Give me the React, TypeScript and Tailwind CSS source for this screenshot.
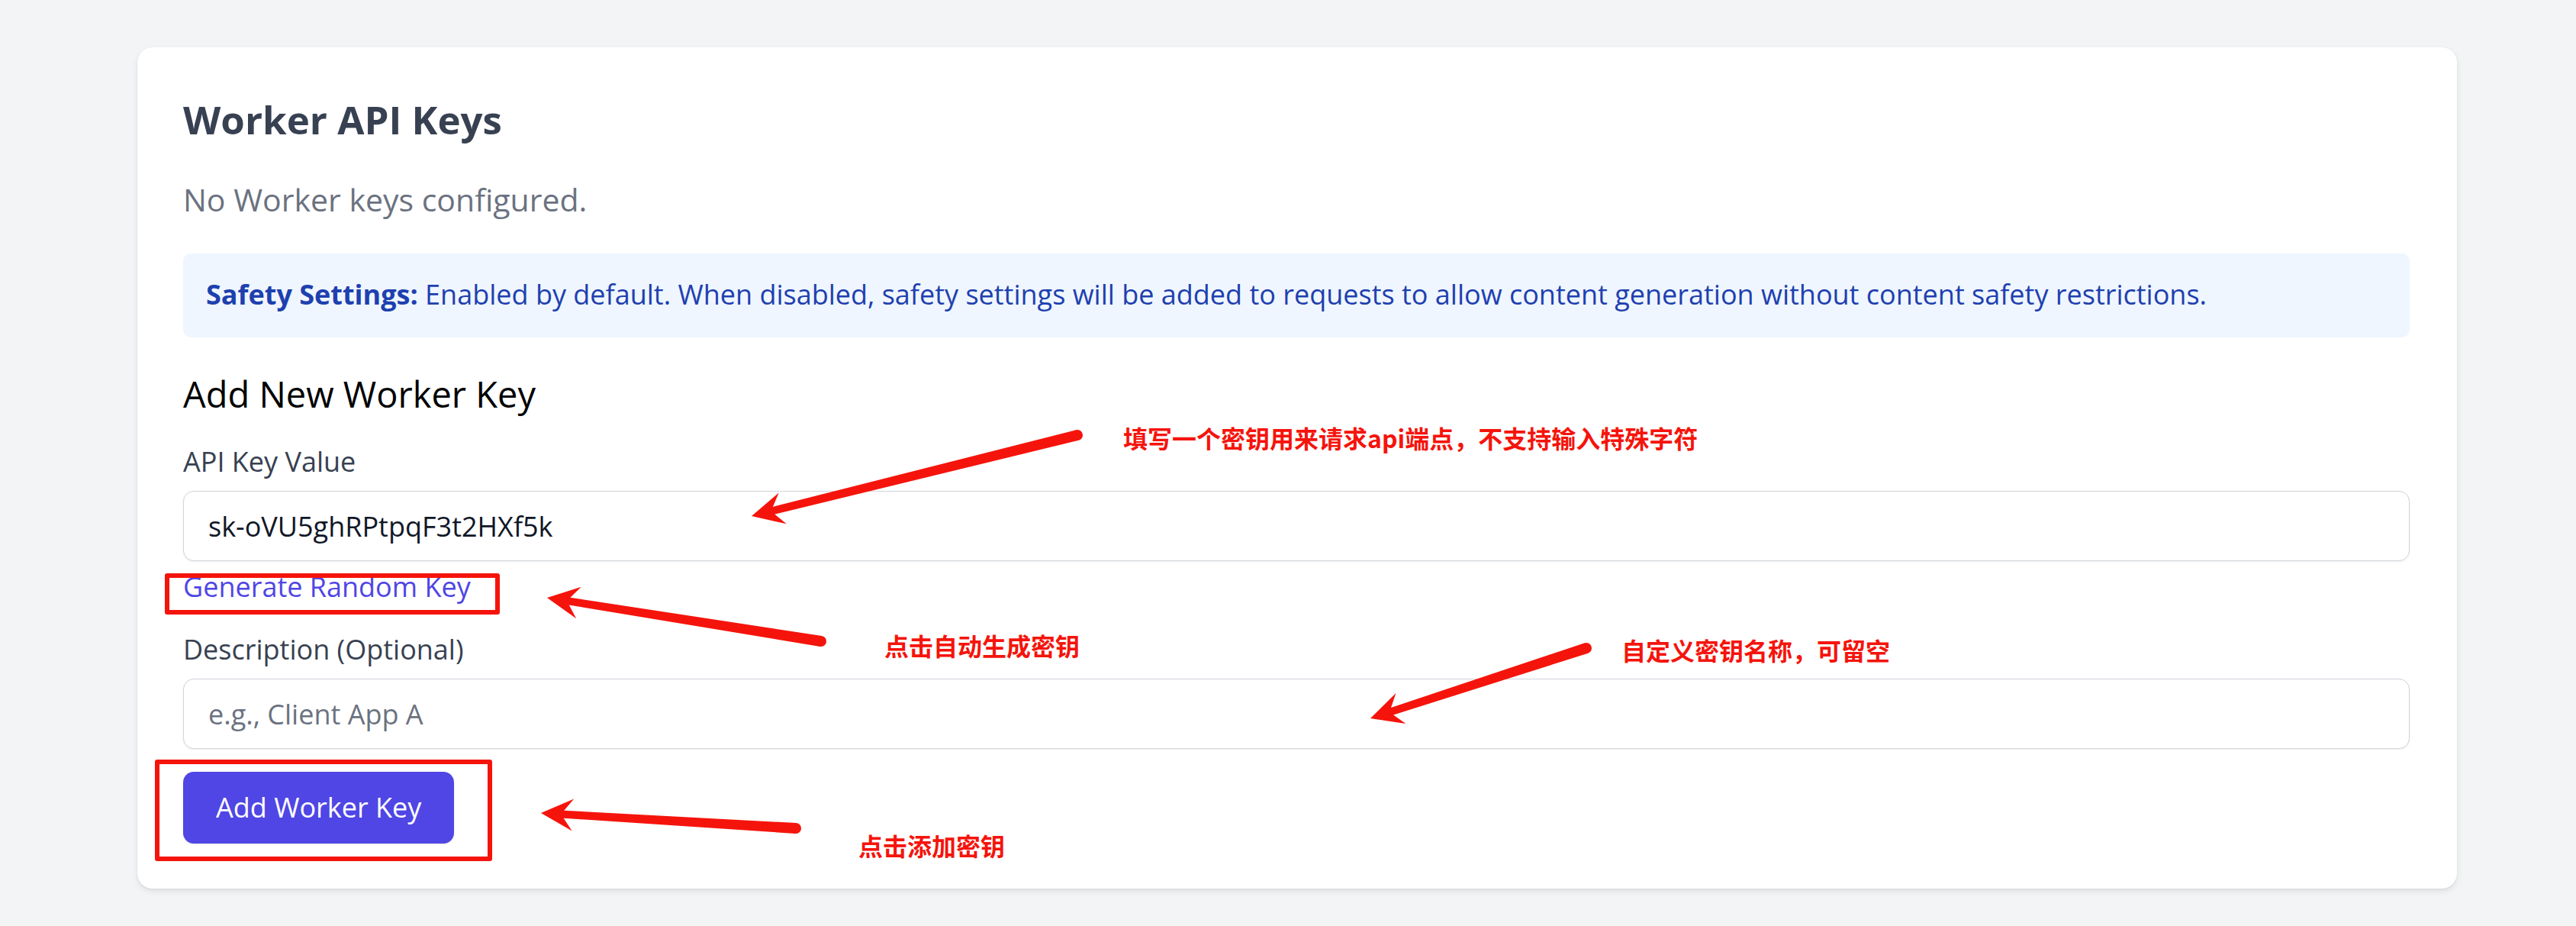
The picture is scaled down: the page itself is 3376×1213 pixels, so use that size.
type Pt = [number, number];

// red callouts drawn over the form (tail -> tip, page pixels)
const arrows: { tail: Pt; tip: Pt }[] = [
  { tail: [1412, 570], tip: [985, 676] },
  { tail: [1076, 840], tip: [717, 783] },
  { tail: [2079, 849], tip: [1796, 941] },
  { tail: [1043, 1085], tip: [709, 1065] },
];

const notes = [
  { text: '填写一个密钥用来请求api端点，不支持输入特殊字符', className: 'left-[1472px] top-[557px]' },
  { text: '点击自动生成密钥', className: 'left-[1159px] top-[829px]' },
  { text: '自定义密钥名称，可留空', className: 'left-[2125px] top-[835px]' },
  { text: '点击添加密钥', className: 'left-[1125px] top-[1091px]' },
];

function arrowPoints(tail: Pt, tip: Pt) {
  const dx = tail[0] - tip[0];
  const dy = tail[1] - tip[1];
  const len = Math.hypot(dx, dy);
  const ux = dx / len;
  const uy = dy / len;
  const nx = -uy;
  const ny = ux;
  const at = (along: number, side: number) =>
    `${(tip[0] + ux * along + nx * side).toFixed(1)},${(tip[1] + uy * along + ny * side).toFixed(1)}`;
  return [at(0, 0), at(42, 21), at(30, 5), at(len, 7), at(len, -7), at(30, -5), at(42, -21)].join(' ');
}

function Annotations() {
  return (
    <div className="pointer-events-none absolute inset-0">
      <svg className="absolute left-0 top-0" width={3376} height={1213} viewBox="0 0 3376 1213">
        {arrows.map((a, i) => (
          <g key={i} fill="#f5140c">
            <polygon points={arrowPoints(a.tail, a.tip)} />
            <circle cx={a.tail[0]} cy={a.tail[1]} r={7} />
          </g>
        ))}
      </svg>

      {/* frames round the link and the button */}
      <div className="absolute left-[216px] top-[751px] h-[54px] w-[439px] rounded-[3px] border-[6px] border-[#f5140c]" />
      <div className="absolute left-[203px] top-[995px] h-[133px] w-[442px] rounded-[3px] border-[6px] border-[#f5140c]" />

      {notes.map((n) => (
        <div
          key={n.text}
          className={`absolute whitespace-nowrap font-['Noto_Sans_CJK_SC',sans-serif] text-[32px] font-bold leading-none text-[#f5140c] ${n.className}`}
        >
          {n.text}
        </div>
      ))}
    </div>
  );
}

function Field({ label, value, placeholder }: { label: string; value?: string; placeholder?: string }) {
  return (
    <>
      <label className="block text-[36px] leading-[50px] text-[#374151]">{label}</label>
      <input
        type="text"
        defaultValue={value}
        placeholder={placeholder}
        className="mt-[13px] block h-[92px] w-full rounded-[14px] border border-[#d1d5db] bg-white px-[32px] text-[36px] text-[#111827] shadow-[0_1px_3px_rgba(0,0,0,0.07)] outline-none placeholder:text-[#6b7280]"
      />
    </>
  );
}

export default function App() {
  return (
    <div className="relative h-[1213px] w-full overflow-hidden bg-[#f3f4f6] pl-[180px] pr-[156px] pt-[62px] font-['Open_Sans',sans-serif]">
      <div className="rounded-[20px] bg-white pb-[59px] pl-[60px] pr-[62px] pt-[58px] shadow-[0_4px_10px_rgba(0,0,0,0.07),0_1px_3px_rgba(0,0,0,0.08)]">
        <h2 className="text-[51px] font-bold leading-[72px] text-[#374151]">Worker API Keys</h2>
        <p className="mt-[39px] text-[41px] leading-[60px] text-[#6b7280]">No Worker keys configured.</p>

        <div className="mt-[41px] rounded-[10px] bg-[#eff6ff] pb-[28px] pl-[30px] pr-[30px] pt-[26px] text-[36px] leading-[56px] text-[#1e40af]">
          <strong className="font-bold">Safety Settings:</strong> Enabled by default. When disabled, safety settings
          will be added to requests to allow content generation without content safety restrictions.
        </div>

        <h3 className="mt-[42px] text-[47px] leading-[64px] text-black">Add New Worker Key</h3>

        <div className="mt-[32px]">
          <Field label="API Key Value" value="sk-oVU5ghRPtpqF3t2HXf5k" />
        </div>
        <button type="button" className="mt-[9px] block text-[36px] leading-[50px] text-[#4f46e5]">
          Generate Random Key
        </button>

        <div className="mt-[32px]">
          <Field label="Description (Optional)" placeholder="e.g., Client App A" />
        </div>

        <button
          type="button"
          className="mt-[30px] h-[94px] rounded-[14px] bg-[#4f46e5] px-[43px] text-[36px] text-white shadow-[0_1px_3px_rgba(0,0,0,0.1)]"
        >
          Add Worker Key
        </button>
      </div>

      <Annotations />
    </div>
  );
}
